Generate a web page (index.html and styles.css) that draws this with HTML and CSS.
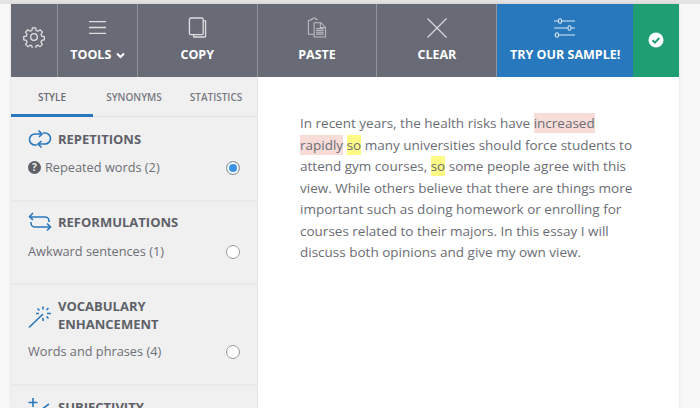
FILE: index.html
```html
<!DOCTYPE html>
<html lang="en">
<head>
<meta charset="utf-8">
<title>Writing checker</title>
<link rel="stylesheet" href="styles.css">
</head>
<body>
<div class="app">
  <header class="toolbar">
    <button class="tool tool-gear" aria-label="Settings">
      <svg width="22" height="22" viewBox="0 0 24 24" fill="none" stroke="#e2e3e5" stroke-width="1.400" stroke-linejoin="round"><circle cx="12" cy="12" r="3.600"/><path d="M10.100 1.600h3.800l.6 3 1.900.8 2.600-1.700 2.700 2.700-1.700 2.600.8 1.900 3 .6v3.800l-3 .6-.8 1.900 1.700 2.600-2.700 2.700-2.600-1.700-1.900.8-.6 3h-3.800l-.6-3-1.900-.8-2.600 1.700-2.700-2.700 1.700-2.600-.8-1.900-3-.6v-3.800l3-.6.8-1.900-1.700-2.600 2.700-2.700 2.600 1.700 1.900-.8z" transform="translate(.6 .6) scale(.95)"/></svg>
    </button>
    <button class="tool tool-tools">
      <span class="tool-icon"><svg width="17" height="13" viewBox="0 0 17 13" stroke="#dcdde0" stroke-width="1.300"><path d="M0 .7h17M0 6.500h17M0 12.300h17"/></svg></span>
      <span class="label">TOOLS <svg class="chev" width="9" height="7" viewBox="0 0 9 7" fill="none" stroke="#fff" stroke-width="2"><path d="M1 1.500l3.500 3.500L8 1.500"/></svg></span>
    </button>
    <button class="tool tool-wide">
      <span class="tool-icon"><svg width="19" height="21" viewBox="0 0 20 22" fill="none" stroke="#dcdde0" stroke-width="1.400" stroke-linejoin="round"><path d="M16 4h2.500v16a1 1 0 0 1-1 1H6v-2.500"/><rect x="1.500" y="1" width="14.500" height="17.500" rx="1.500"/></svg></span>
      <span class="label">COPY</span>
    </button>
    <button class="tool tool-wide">
      <span class="tool-icon"><svg width="20" height="21" viewBox="0 0 20 22" fill="none" stroke="#bdbec3" stroke-width="1.100" stroke-linejoin="round"><path d="M6.500 18H1V3.500h3M4 3.500V2.200h1.500a1.500 1.500 0 0 1 3 0H10v1.300"/><path d="M7 6h7l5 5v10H7z"/><path d="M13.500 6v5H19"/><path d="M9 12h8M9 14h8M9 16h8M9 18h8" stroke-width="1.200"/></svg></span>
      <span class="label">PASTE</span>
    </button>
    <button class="tool tool-wide">
      <span class="tool-icon"><svg width="20" height="20" viewBox="0 0 20 20" stroke="#dcdde0" stroke-width="1.100"><path d="M.500.500l19 19M19.500.500l-19 19"/></svg></span>
      <span class="label">CLEAR</span>
    </button>
    <button class="tool tool-sample">
      <span class="tool-icon"><svg width="22" height="20" viewBox="0 0 22 20" fill="none" stroke="#dbe7f2" stroke-width="1.100"><path d="M0 3h4M8 3h13M0 10h13.500M17.500 10H21M5 17h16M0 17h.500"/><rect x="4.500" y=".800" width="3" height="4.400" rx="1.500"/><rect x="14" y="7.800" width="3" height="4.400" rx="1.500"/><rect x="1.500" y="14.800" width="3" height="4.400" rx="1.500"/></svg></span>
      <span class="label">TRY OUR SAMPLE!</span>
    </button>
    <button class="tool tool-check" aria-label="Check">
      <svg width="16" height="16" viewBox="0 0 16 16"><circle cx="8" cy="8" r="7.500" fill="#fff"/><path d="M4.500 8.200l2.400 2.400 4.400-4.600" fill="none" stroke="#1f9e73" stroke-width="2"/></svg>
    </button>
  </header>
  <div class="main">
    <aside class="sidebar">
      <nav class="tabs">
        <span class="tab tab-active">STYLE</span>
        <span class="tab">SYNONYMS</span>
        <span class="tab">STATISTICS</span>
      </nav>
      <section class="group group-rep">
        <h2 class="group-title">
          <svg width="24" height="20" viewBox="0 0 24 20" fill="none" stroke="#2878bd" stroke-width="1.600"><path d="M9 16H7a5.500 5.500 0 0 1 0-11h6"/><path d="M15 4h2a5.500 5.500 0 0 1 0 11h-6"/><path d="M10.500 1.500L14 5l-3 3M13.500 12l-3.500 3 3.500 3.500"/></svg>
          <span>REPETITIONS</span>
        </h2>
        <div class="option">
          <svg class="help" width="13" height="13" viewBox="0 0 13 13"><circle cx="6.500" cy="6.500" r="6.500" fill="#5e6068"/><text x="6.500" y="10" text-anchor="middle" class="help-mark">?</text></svg>
          <span class="option-text">Repeated words (2)</span>
          <span class="radio radio-on"></span>
        </div>
      </section>
      <section class="group group-ref">
        <h2 class="group-title">
          <svg width="24" height="20" viewBox="0 0 24 20" fill="none" stroke="#2878bd" stroke-width="1.600"><path d="M2 5h15a4 4 0 0 1 4 4v1"/><path d="M22 15H7a4 4 0 0 1-4-4v-1"/><path d="M5 1L1.500 4.700 5 8M19 11.500l3.500 3.500-3.500 3.500"/></svg>
          <span>REFORMULATIONS</span>
        </h2>
        <div class="option">
          <span class="option-text">Awkward sentences (1)</span>
          <span class="radio"></span>
        </div>
      </section>
      <section class="group group-voc">
        <h2 class="group-title">
          <svg class="wand" width="24" height="24" viewBox="0 0 24 24" fill="none" stroke="#2878bd" stroke-width="1.600"><path d="M1 22.500L15 9"/><path d="M15 1.500v3M15 13v3M19 8.500h4M8 8.500h3M9.500 3.500l2 2M20.500 3l-2 2M18.500 11.500l2 2"/></svg>
          <span>VOCABULARY<br>ENHANCEMENT</span>
        </h2>
        <div class="option">
          <span class="option-text">Words and phrases (4)</span>
          <span class="radio"></span>
        </div>
      </section>
      <section class="group group-sub">
        <h2 class="group-title">
          <svg width="24" height="20" viewBox="0 0 24 20" fill="none" stroke="#2878bd" stroke-width="1.600"><path d="M5 1v9M.500 5.500h9M13 13l8-6"/></svg>
          <span>SUBJECTIVITY</span>
        </h2>
      </section>
    </aside>
    <article class="content">
      <p class="essay">In recent years, the health risks have <mark class="hl-red">increased rapidly</mark> <mark class="hl-yellow">so</mark> many universities should force students to attend gym courses, <mark class="hl-yellow">so</mark> some people agree with this view. While others believe that there are things more important such as doing homework or enrolling for courses related to their majors. In this essay I will discuss both opinions and give my own view.</p>
    </article>
  </div>
</div>
</body>
</html>
```

FILE: styles.css
```css
* { box-sizing: border-box; }
html, body { height: 100%; }
body {
  margin: 0;
  height: 408px;
  overflow: hidden;
  padding: 4px 21px 0 11px;
  background: linear-gradient(#e3e3e3 0, #e3e3e3 4px, #f8f8f8 4px);
  font-family: "Open Sans", sans-serif;
}
.app { display: flex; flex-direction: column; height: 404px; overflow: hidden; background: #fff; box-shadow: 0 0 3px rgba(0, 0, 0, .12); }
.toolbar { display: flex; height: 73px; background: #686b75; flex: none; }
.tool {
  display: flex; flex-direction: column; align-items: center; justify-content: flex-start;
  margin: 0; padding: 13px 0 0; border: 0; border-right: 1px solid #92949c;
  background: transparent; color: #fff; font: inherit;
}
.tool-icon { display: flex; align-items: center; justify-content: center; height: 21px; margin-bottom: 9px; }
.tool-gear { width: 47px; padding-top: 22px; }
.tool-tools { width: 80px; }
.tool-wide { width: 120px; }
.tool-sample { width: 136px; background: #2878bd; border-right: 0; }
.tool-check { width: 46px; background: #1f9e73; border-right: 0; padding-top: 28px; }
.label { font-size: 12.500px; font-weight: 700; line-height: 16px; white-space: nowrap; }
.chev { margin-left: 1px; }
.main { display: flex; flex: 1; min-height: 0; }
.sidebar { width: 247px; flex: none; background: #f0f0f0; border-right: 1px solid #e6e6e6; }
.tabs { display: flex; height: 40px; border-bottom: 1px solid #e2e2e2; }
.tab {
  width: 82px; text-align: center; font-size: 10px; font-weight: 600; line-height: 40px;
  color: #777981;
}
.tab-active { border-bottom: 3px solid #2878bd; height: 40px; color: #686b75; }
.group { padding: 12px 17px 0 17px; border-bottom: 2px solid #e8e8e8; }
.group-rep { height: 85px; }
.group-ref { height: 83px; padding-top: 10px; }
.group-voc { height: 101px; padding-top: 12px; }
.group-sub { padding-top: 11px; border-bottom: 0; }
.group-title {
  display: flex; align-items: center; gap: 6px; margin: 0;
  font-size: 13px; font-weight: 700; line-height: 18px; color: #5e6068;
}
.group-title svg { flex: none; width: 24px; }
.wand { margin-top: 4px; }
.option { display: flex; align-items: center; margin-top: 8px; height: 20px; font-size: 12.750px; color: #6d6f76; }
.group-ref .option { margin-top: 9px; }
.help { margin-right: 4px; flex: none; }
.help-mark { fill: #f0f0f0; font-size: 10px; font-weight: 700; font-family: "Open Sans", sans-serif; }
.option-text { flex: 1; }
.radio {
  width: 14px; height: 14px; border-radius: 50%; flex: none; background: #fff; border: 1.500px solid #9a9a9a; margin-top: 2px;
}
.radio-on { background: #3b93e6; box-shadow: inset 0 0 0 2px #fff; }
.content { flex: 1; background: #fff; padding: 36px 43px 0 42px; }
.essay { margin: 0; font-size: 13.500px; line-height: 21.500px; color: #6b6d74; }
mark { color: inherit; }
.hl-red { background: #f8dcd8; padding: 1px 0; }
.hl-yellow { background: #fdfb85; padding: 1px 0; }
```
